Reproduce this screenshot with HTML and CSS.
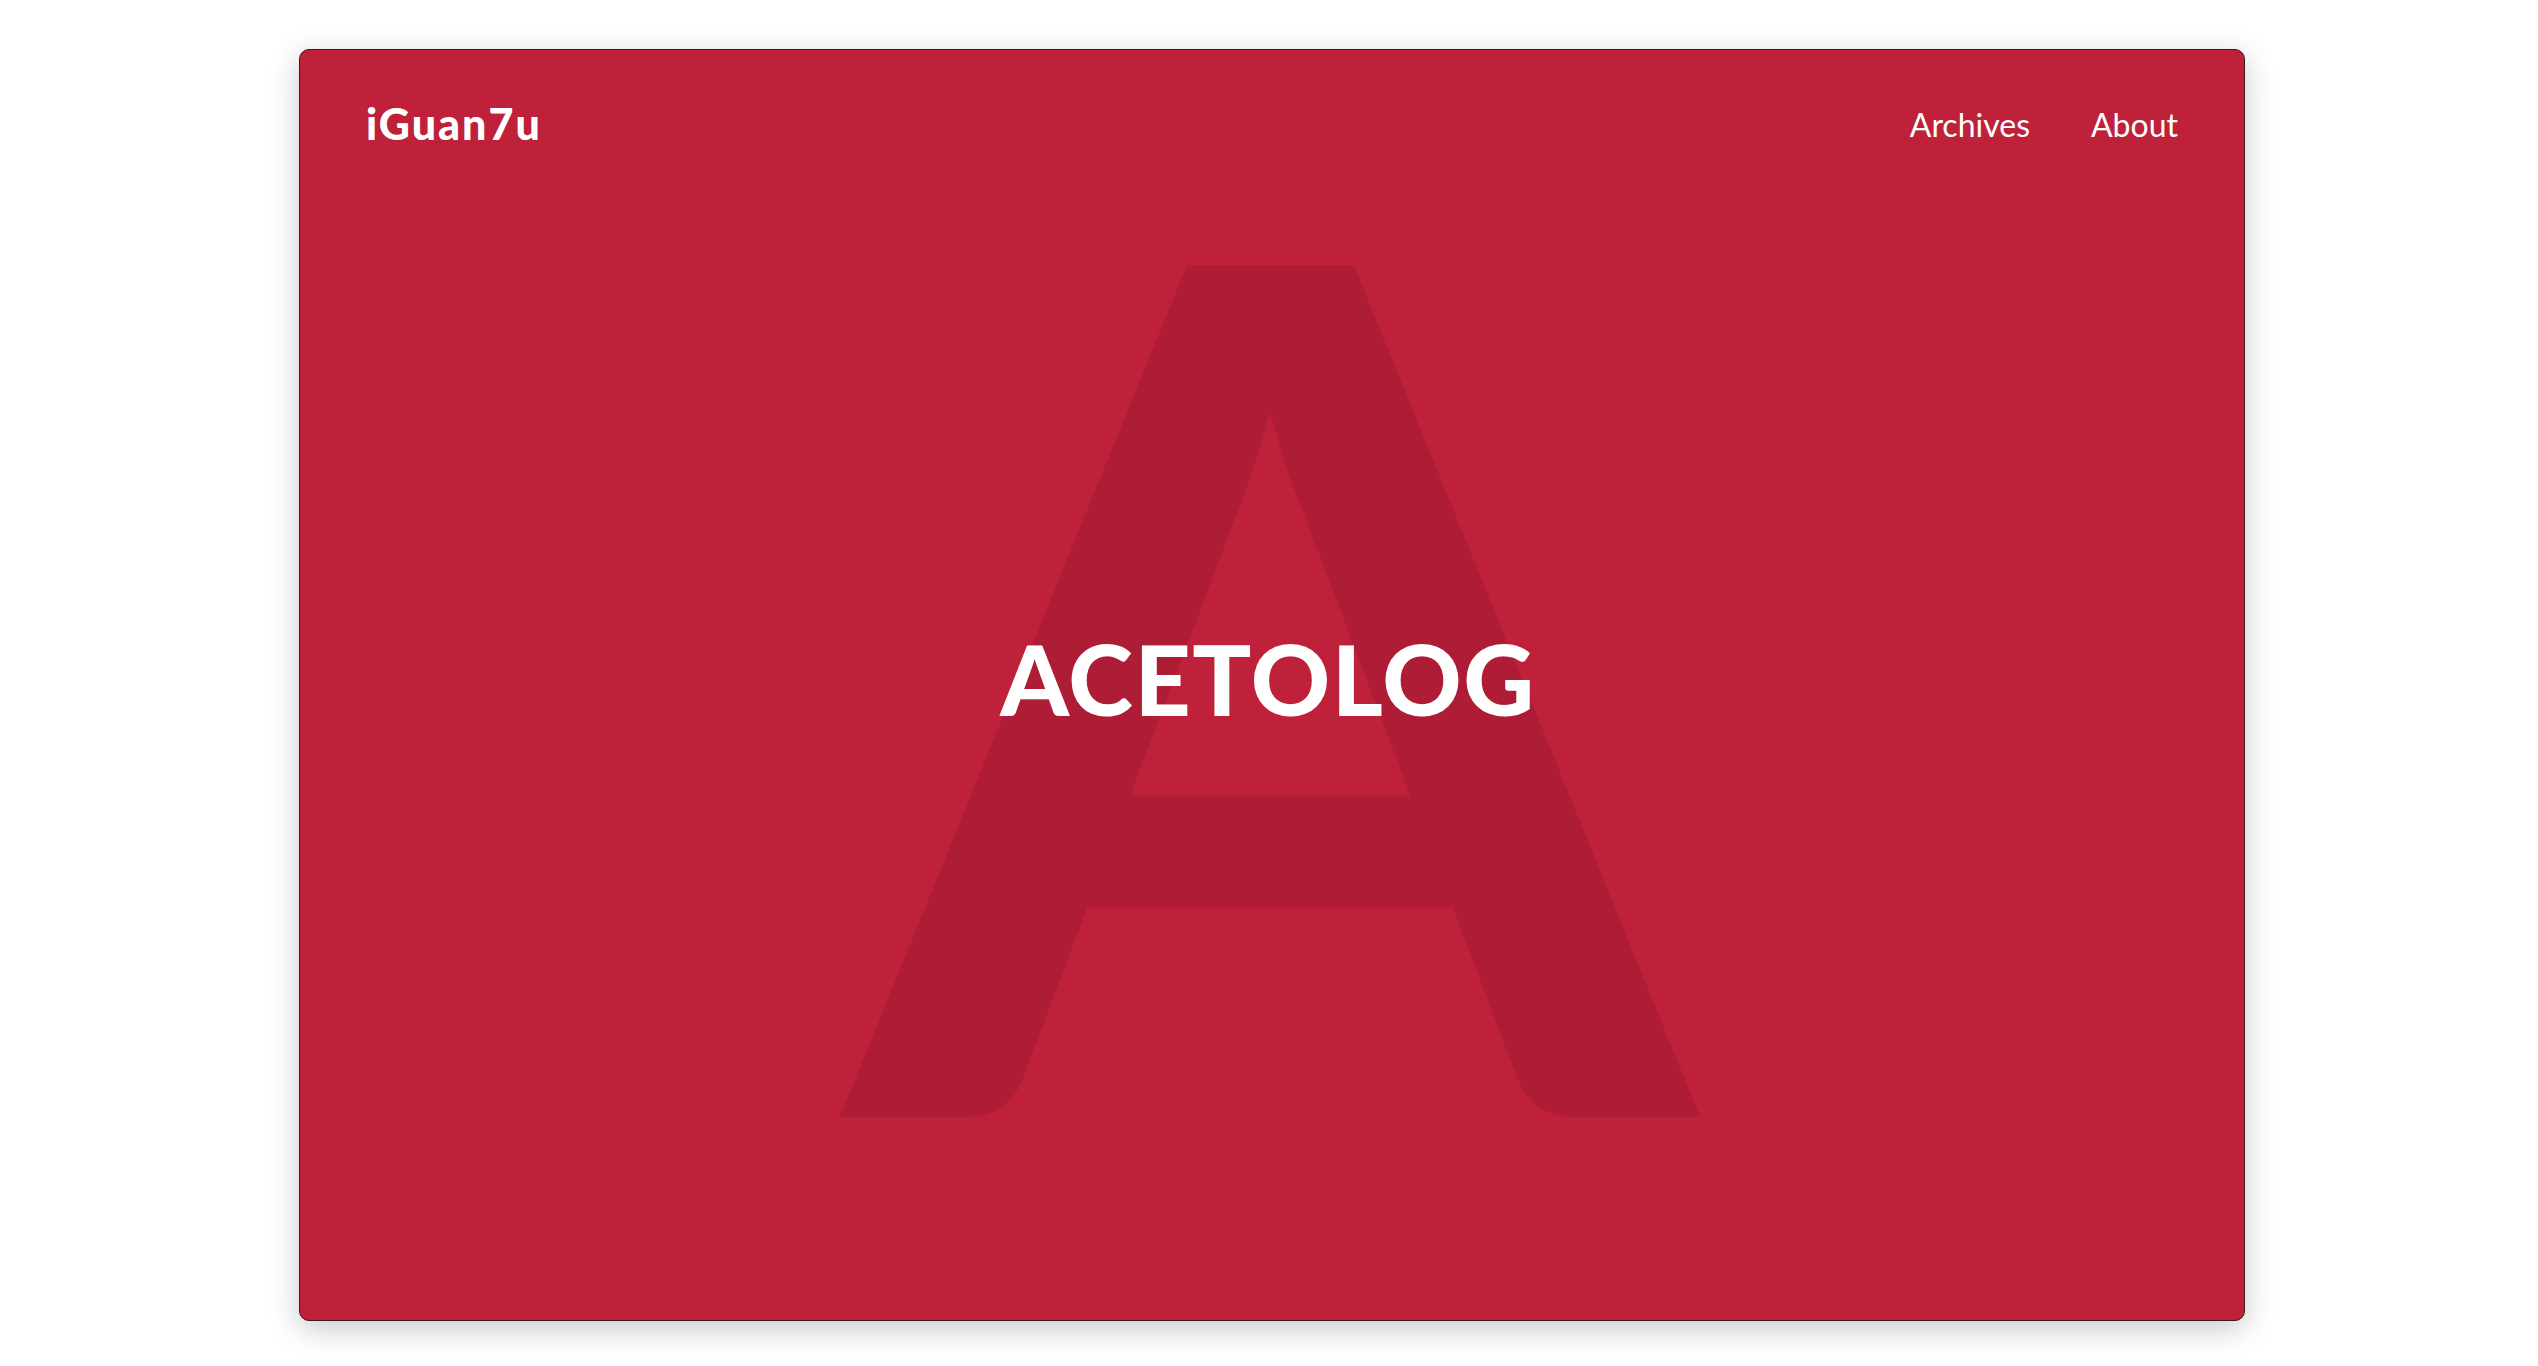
FILE: index.html
```html
<!DOCTYPE html>
<html lang="en">
<head>
<meta charset="utf-8">
<title>iGuan7u</title>
<link rel="stylesheet" href="styles.css">
</head>
<body>
<div class="page">
  <div class="card">
    <div class="bigletter" aria-hidden="true">A</div>
    <header class="header">
      <a class="logo" href="#">iGuan7u</a>
      <nav class="nav">
        <a href="#">Archives</a>
        <a href="#">About</a>
      </nav>
    </header>
    <h1 class="title">ACETOLOG</h1>
  </div>
</div>
</body>
</html>
```

FILE: styles.css
```css
html, body {
  margin: 0;
  padding: 0;
  background: #ffffff;
}
.page {
  padding: 49px 0 0 299px;
  height: 1366px;
  box-sizing: border-box;
}
.card {
  width: 1946px;
  height: 1272px;
  box-sizing: border-box;
  border: 1px solid #3a1a20;
  border-radius: 10px;
  background: #be2139;
  box-shadow: 0 8px 30px rgba(0, 0, 0, 0.22);
  display: grid;
  grid-template: 1fr / 1fr;
  overflow: hidden;
  font-family: "Lato", "DejaVu Sans", sans-serif;
  color: #ffffff;
}
.card > * {
  grid-area: 1 / 1;
}
.bigletter {
  place-self: center;
  font-family: "Lato", sans-serif;
  font-weight: 700;
  font-size: 1178px;
  line-height: 1;
  color: #ae1d35;
  transform: translate(-2px, -24px) scaleX(1.035);
  user-select: none;
}
.header {
  align-self: start;
  display: flex;
  justify-content: space-between;
  align-items: center;
  padding: 48px 66px 0 66px;
}
.logo {
  color: #fff;
  text-decoration: none;
  font-weight: 900;
  font-size: 43px;
  letter-spacing: 2px;
}
.nav {
  display: flex;
  gap: 61px;
  margin-top: 2px;
}
.nav a {
  color: #fff;
  text-decoration: none;
  font-size: 32px;
  font-weight: 400;
}
.title {
  place-self: center;
  margin: 0;
  font-size: 98px;
  font-weight: 900;
  letter-spacing: 1.5px;
  transform: translate(-4px, -7px);
  position: relative;
}
```
